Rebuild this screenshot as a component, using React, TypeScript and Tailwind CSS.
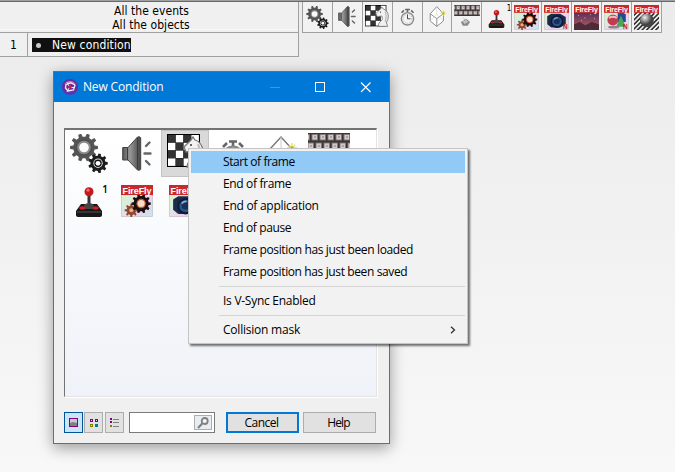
import React from "react";

type IconProps = { w: number; h: number };

function gearPath(cx: number, cy: number, outer: number, inner: number, teeth: number) {
  const pts: string[] = [];
  const step = (Math.PI * 2) / teeth;
  for (let i = 0; i < teeth; i++) {
    const a = i * step;
    [
      [a - step * 0.3, inner],
      [a - step * 0.18, outer],
      [a + step * 0.18, outer],
      [a + step * 0.3, inner],
    ].forEach(([t, r]) => pts.push(`${(cx + Math.cos(t) * r).toFixed(2)} ${(cy + Math.sin(t) * r).toFixed(2)}`));
  }
  return `M${pts.join("L")}Z`;
}

function Gears({ w, h }: IconProps) {
  return (
    <svg width={w} height={h} viewBox="0 0 38 39">
      <path d={gearPath(14, 13.5, 14, 10.8, 10)} fill="#555" />
      <circle cx="14" cy="13.5" r="7.4" fill="#8a8a8a" stroke="#444" />
      <circle cx="14" cy="13.5" r="4.8" fill="#fafafa" />
      <path d={gearPath(28, 29.3, 9.8, 7.6, 9)} fill="#1c1c1c" />
      <circle cx="28" cy="29.3" r="4.7" fill="#ddd" />
      <circle cx="28" cy="29.3" r="3.7" fill="#111" />
      <circle cx="28" cy="29.3" r="2.4" fill="#fff" />
    </svg>
  );
}

function Speaker({ w, h }: IconProps) {
  return (
    <svg width={w} height={h} viewBox="0 0 30 35">
      <defs>
        <linearGradient id="cone" x1="0" x2="1">
          <stop offset="0" stopColor="#555" />
          <stop offset=".4" stopColor="#999" />
          <stop offset=".75" stopColor="#666" />
          <stop offset="1" stopColor="#444" />
        </linearGradient>
      </defs>
      <path d="M.7 11.5H6L15.5 1Q18 0 18.7 2V33Q18 35 15.5 34L6 24H.7Z" fill="url(#cone)" stroke="#444" />
      <path d="M5.5 12V24M15.5 2V33" stroke="#3a3a3a" fill="none" />
      <path d="M24 10l3.5-3.5M22.5 17.5H28.5M24 25l3.5 3.5" stroke="#666" strokeWidth="2.4" strokeLinecap="round" />
    </svg>
  );
}

function Chess({ w, h }: IconProps) {
  const squares = Array.from({ length: 16 }, (_, i) => [i % 4, Math.floor(i / 4)]);
  return (
    <svg width={w} height={h} viewBox="0 0 37 34">
      <rect width="33" height="33" fill="#000" />
      {squares.map(([x, y]) => (
        <rect key={`${x}-${y}`} x={1 + x * 7.8} y={1 + y * 7.8} width="7.5" height="7.5" fill={(x + y) % 2 ? "#fff" : "#333"} />
      ))}
      <path
        d="M17 13L24 6L26 3L28 6Q35 8 36 17Q36 23 33 27L35 33H20Q20 28 27 22L26 17L19 18Z"
        fill="#f2f2f2"
        stroke="#777"
        strokeWidth="1.3"
      />
      <path d="M31 10Q34 16 31 26" fill="none" stroke="#bbb" strokeWidth="2" />
      <circle cx="24" cy="11" r=".9" fill="#222" />
    </svg>
  );
}

function Stopwatch({ w, h }: IconProps) {
  return (
    <svg width={w} height={h} viewBox="0 0 24 30">
      <path d="M8 2.5h8M12 3v5M2 8l4-4M22 8l-4-4" stroke="#666" strokeWidth="2.6" />
      <circle cx="12" cy="18" r="10.3" fill="#f4f4f4" stroke="#888" strokeWidth="2.2" />
      <circle cx="12" cy="18" r="7.4" fill="none" stroke="#888" strokeWidth="1.6" strokeDasharray="1 2.4" />
      <path d="M12 11v7h5" fill="none" stroke="#444" strokeWidth="1.6" />
    </svg>
  );
}

function Cube({ w, h }: IconProps) {
  return (
    <svg width={w} height={h} viewBox="0 0 28 35">
      <path d="M12 1L23 13V25L12 34L1 25V13Z" fill="#fff" stroke="#777" strokeWidth="1.4" />
      <path d="M1 13L12 21L23 13M12 21V34" fill="none" stroke="#777" strokeWidth="1.3" />
      <path d="M12 1V14L1 25M12 14L23 25" fill="none" stroke="#ccc" />
      <path d="M23 7v10M18 12h10M20 9l6 6M26 9l-6 6" stroke="#e6e23c" strokeWidth="1.3" />
      <circle cx="23" cy="12" r="1.5" fill="#999" />
    </svg>
  );
}

function Keyboard({ w, h }: IconProps) {
  return (
    <svg width={w} height={h} viewBox="0 0 42 36">
      <rect width="42" height="18" fill="#393535" />
      {[0, 1, 2, 3, 4, 5].map((i) => (
        <g key={i}>
          <rect x={i * 8 - 4} y="1.5" width="5.5" height="5.5" fill="#d4c9cb" stroke="#827777" />
          <rect x={i * 8} y="10" width="5.5" height="5.5" fill="#d4c9cb" stroke="#827777" />
          <path d={`M${i * 8 - 2} 4h2M${i * 8 + 2} 13h2`} stroke="#877" />
        </g>
      ))}
      <path d="M15 21l3 4" stroke="#999" />
      <path d="M11 28L20 23L26 28L22 34L14 34Z" fill="#888" />
      <path d="M14 27L20 24L23 28L17 31Z" fill="#c4c4c4" />
    </svg>
  );
}

function Joystick({ w, h }: IconProps) {
  return (
    <svg width={w} height={h} viewBox="0 0 26 30">
      <path d="M13 6V22" stroke="#333" strokeWidth="3" />
      <circle cx="13" cy="4.7" r="4.5" fill="#c8161d" />
      <circle cx="12" cy="3.2" r="1.6" fill="#f06a6a" />
      <path d="M5 17H21L26 24V28Q26 30 23 30H3Q0 30 0 28V24Z" fill="#181818" />
      <path d="M8 18Q13 14 18 18L17 22H9Z" fill="#444" />
      <ellipse cx="6.3" cy="21" rx="3" ry="1.7" fill="#d91c22" />
      <ellipse cx="19.7" cy="21" rx="3" ry="1.7" fill="#d91c22" />
      <path d="M1 25H25" stroke="#555" />
    </svg>
  );
}

type FlyKind = "gears" | "camera" | "sunset" | "shapes" | "ball";

function FireFly({ w, h, kind }: IconProps & { kind: FlyKind }) {
  return (
    <svg width={w} height={h} viewBox="0 0 31 31" preserveAspectRatio="none" className="overflow-visible">
      <defs>
        <linearGradient id="pastel" x1="0" y1="0" x2="1" y2="1">
          <stop offset="0" stopColor="#f4eaa8" />
          <stop offset=".35" stopColor="#d4f0dc" />
          <stop offset=".65" stopColor="#f8ccee" />
          <stop offset="1" stopColor="#bdeaf0" />
        </linearGradient>
        <linearGradient id="dusk" x1="0" y1="0" x2="0" y2="1">
          <stop offset="0" stopColor="#54305f" />
          <stop offset=".7" stopColor="#a0515c" />
          <stop offset="1" stopColor="#5c2f35" />
        </linearGradient>
        <radialGradient id="steel" cx=".35" cy=".3">
          <stop offset="0" stopColor="#eee" />
          <stop offset=".5" stopColor="#999" />
          <stop offset="1" stopColor="#444" />
        </radialGradient>
        <pattern id="stripes" width="4" height="4" patternUnits="userSpaceOnUse" patternTransform="rotate(45)">
          <rect width="4" height="4" fill="#eee" />
          <rect width="2" height="4" fill="#333" />
        </pattern>
      </defs>
      <rect x=".4" y=".4" width="30.2" height="30.2" fill="url(#pastel)" stroke="#bbb" strokeWidth=".6" />
      {kind === "gears" && (
        <g>
          <path d={gearPath(10, 24.5, 6.5, 4.6, 8)} fill="#8c4a30" />
          <circle cx="10" cy="24.5" r="2" fill="#f0b07a" />
          <path d={gearPath(19.5, 18, 9.4, 7.4, 10)} fill="#17100e" />
          <circle cx="19.5" cy="18" r="4.6" fill="#d1532f" />
          <circle cx="19.5" cy="18" r="3.4" fill="#f5dccb" />
        </g>
      )}
      {kind === "camera" && (
        <g>
          <path d="M4 14L9 11H20L27 15V24L20 28H9L4 24Z" fill="#1d2a48" />
          <circle cx="16" cy="20.5" r="7" fill="#2b5484" stroke="#0b1a38" strokeWidth="2" />
          <circle cx="16" cy="20" r="3.6" fill="#16305a" />
          <path d="M12.5 18Q14 15.500 17 16" stroke="#8db4d8" strokeWidth="1.6" fill="none" />
          <text x="23.500" y="30" fontFamily="Liberation Sans" fontSize="8" fontWeight="bold" fill="#c21d25">N</text>
        </g>
      )}
      {kind === "sunset" && (
        <g>
          <rect x="0" y="9" width="31" height="22" fill="url(#dusk)" />
          <path d="M0 24L7 21L14 25L22 21L31 24V31H0Z" fill="#4d2b38" />
          <path d="M5 13h1M13 16h1M20 12h1M25 17h1M9 19h1" stroke="#edc" />
        </g>
      )}
      {kind === "shapes" && (
        <g>
          <rect x="17" y="10" width="10" height="11" fill="#244992" />
          <path d="M21 13L27 27H15Z" fill="#4da657" />
          <circle cx="11" cy="18.500" r="6.8" fill="#c23c50" />
          <path d="M6 16Q11 13 16 16" stroke="#f0bcc2" strokeWidth="2.4" fill="none" />
          <ellipse cx="12" cy="27.500" rx="7" ry="1.700" fill="#888" />
          <text x="23.500" y="30" fontFamily="Liberation Sans" fontSize="8" fontWeight="bold" fill="#c21d25">N</text>
        </g>
      )}
      {kind === "ball" && (
        <g>
          <rect y="9" width="31" height="22" fill="url(#stripes)" />
          <circle cx="16" cy="19" r="8.5" fill="url(#steel)" />
        </g>
      )}
      <rect width="31" height="9.7" fill="#c9292d" />
      <text x="1.5" y="8.3" textLength="28" lengthAdjust="spacing" fontFamily="Liberation Sans" fontWeight="bold" fontSize="8.7" fill="#fff">FireFly</text>
    </svg>
  );
}

function OneBadge({ children, className }: { children: React.ReactNode; className: string }) {
  return (
    <div className="relative flex">
      {children}
      <span className={`absolute text-black ${className}`}>1</span>
    </div>
  );
}

const toolbar = [
  <Gears w={23} h={23} />,
  <div className="pb-[2px]"><Speaker w={18} h={21} /></div>,
  <div className="pb-[3px]"><Chess w={24} h={22} /></div>,
  <Stopwatch w={15} h={18} />,
  <div className="pb-[2px] pl-[2px]"><Cube w={18} h={21} /></div>,
  <div className="pb-[3px]"><Keyboard w={26} h={22} /></div>,
  <OneBadge className="-top-[2px] -right-[6px] text-[8px] leading-[10px]">
    <div className="pt-[4px]"><Joystick w={17} h={18} /></div>
  </OneBadge>,
  <FireFly w={25} h={25} kind="gears" />,
  <FireFly w={25} h={25} kind="camera" />,
  <FireFly w={25} h={25} kind="sunset" />,
  <FireFly w={25} h={25} kind="shapes" />,
  <FireFly w={25} h={25} kind="ball" />,
];

const objects = [
  <Gears w={38} h={39} />,
  <Speaker w={30} h={35} />,
  <div className="pb-[5px] pl-[1px]"><Chess w={37} h={34} /></div>,
  <Stopwatch w={24} h={30} />,
  <div className="pl-[4px]"><Cube w={28} h={35} /></div>,
  <div className="pb-[6px]"><Keyboard w={42} h={36} /></div>,
  <OneBadge className="-top-[1px] -right-[5px] text-[10px] leading-[10px] font-semibold">
    <div className="px-px pt-[2px]"><Joystick w={26} h={30} /></div>
  </OneBadge>,
  <FireFly w={32} h={32} kind="gears" />,
  <FireFly w={32} h={32} kind="camera" />,
];

function MenuItem({ label, active, arrow, tracking }: { label: string; active?: boolean; arrow?: boolean; tracking: string }) {
  return (
    <div className={`flex h-[22px] items-center justify-between pr-[9px] pl-8 ${active ? "bg-[#91c9f7]" : ""}`}>
      <span className={`whitespace-nowrap ${tracking}`}>{label}</span>
      {arrow && (
        <svg width="6" height="8" viewBox="0 0 6 8">
          <path d="M1 .7L4.500 4L1 7.3" fill="none" stroke="#333" strokeWidth="1.3" />
        </svg>
      )}
    </div>
  );
}

function Separator() {
  return <div className="mt-[3px] mb-[3px] ml-[28px] h-px bg-[#d5d5d5]" />;
}

export default function App() {
  return (
    <div className="relative h-[472px] w-[675px] overflow-hidden bg-linear-to-b from-[#ebebeb] to-[#f8f8f8] text-black">
      <div className="h-px bg-[#a0a0a0]" />
      <div className="h-px bg-[#696969]" />
      <div className="flex items-start font-['DejaVu_Sans_Condensed','DejaVu_Sans',sans-serif] text-[12px]">
        <div className="w-[299px] border-r border-[#a0a0a0] bg-[#f0f0f0]">
          <div className="flex h-[31px] flex-col items-center border-b border-[#a0a0a0] bg-linear-to-b from-transparent from-[27px] via-white via-[27px] to-transparent to-[28px] pt-[2px] leading-[14px]">
            <span className="pl-[5px] tracking-[0.05px]">All the events</span>
            <span className="pl-[4px] tracking-[0.05px]">All the objects</span>
          </div>
          <div className="flex h-6 border-b border-[#a0a0a0]">
            <div className="flex w-7 items-center justify-center border-r border-[#a0a0a0]">1</div>
            <div className="flex items-center pl-1">
              <div className="flex h-[14px] w-[99px] items-center bg-[#101010] pl-1 leading-[14px] text-white">
                <span className="mt-[2px] mr-[11px] h-[5px] w-[5px] shrink-0 rounded-full bg-[#c8c8c8]" />
                <span className="whitespace-nowrap tracking-[0.15px]">New condition</span>
              </div>
            </div>
          </div>
        </div>
        <div className="ml-[3px] flex h-[31px] border-b border-l border-[#a0a0a0] bg-[#f2f2f2]">
          {toolbar.map((icon, i) => (
            <div key={i} className="flex w-[29.9px] items-center justify-center border-r border-[#a0a0a0]">{icon}</div>
          ))}
        </div>
      </div>

      <div className="absolute top-[71px] left-[53px] flex h-[373px] w-[337px] flex-col border border-[#1883d7] bg-[#f0f0f0] font-['Open_Sans','Noto_Sans',sans-serif] text-[12px] shadow-[0_4px_14px_rgba(0,0,0,0.38)]">
        <div className="flex h-[30px] shrink-0 items-center bg-[#0078d7] pl-2 text-white">
          <svg width="16" height="16" viewBox="0 0 16 16">
            <defs>
              <radialGradient id="orb" cx=".5" cy=".9">
                <stop offset="0" stopColor="#4a3cc8" />
                <stop offset="1" stopColor="#6c2a9c" />
              </radialGradient>
            </defs>
            <circle cx="8" cy="8" r="8" fill="url(#orb)" />
            <path d="M2 5Q8 -1 14 5Q8 3 2 5Z" fill="#d5bce4" opacity=".7" />
            <path d="M4 5.5L9 4L13 6L11.500 11L6 12L3.500 9Z" fill="none" stroke="#eee" strokeWidth="1.3" />
            <path d="M5 3.500L7 7M13 8.500L9 8.500M5 13L7 9" stroke="#eee" />
            <circle cx="8" cy="8" r="1.7" fill="#d51e3f" />
          </svg>
          <span className="ml-[5px] grow tracking-[-0.17px]">New Condition</span>
          <svg className="mr-[17px]" width="102" height="12" viewBox="0 0 102 12">
            <path d="M0 6.500H10" stroke="#3f97df" />
            <rect x="45.500" y="1.500" width="9" height="9" fill="none" stroke="#fff" />
            <path d="M91 1.500L100.500 11M100.500 1.500L91 11" stroke="#fff" strokeWidth="1.1" />
          </svg>
        </div>

        <div className="mt-[26px] ml-[10px] grid h-[269px] w-[313px] shrink-0 grid-cols-[repeat(6,48px)] grid-rows-[47px_48px] content-start border border-t-2 border-[#e3e3e3] border-t-[#737373] border-l-[#737373] bg-linear-to-b from-white to-[#eff2f8] shadow-[1px_1px_0_#fff]">
          {objects.map((icon, i) => (
            <div key={i} className={`flex items-center justify-center ${i === 2 ? "border border-[#c3c3c3] bg-[#d9d9d9]" : ""}`}>{icon}</div>
          ))}
        </div>

        <div className="mt-[15px] flex h-[21px] items-stretch pl-[10px]">
          <div className="flex w-[19px] items-center justify-center border border-[#005499] bg-[#cce4f7]">
            <svg width="9" height="9" viewBox="0 0 9 9">
              <rect x=".5" y=".5" width="8" height="8" fill="#c8c8c8" stroke="#800080" />
              <path d="M1 5L4 4L8 5V8H1Z" fill="#808080" />
            </svg>
          </div>
          <div className="ml-px flex w-[19px] items-center justify-center border border-[#adadad] bg-[#e1e1e1]">
            <svg width="9" height="9" viewBox="0 0 9 9" fill="#ddd" shapeRendering="crispEdges">
              <rect x="1.500" y="1.500" width="2" height="2" stroke="#800080" />
              <rect x="6.500" y="1.500" width="2" height="2" stroke="#800080" />
              <rect x="1.500" y="6.500" width="2" height="2" stroke="#808000" />
              <rect x="6.500" y="6.500" width="2" height="2" fill="#008080" stroke="#008080" />
            </svg>
          </div>
          <div className="ml-[2px] flex w-[19px] items-center justify-center border border-[#adadad] bg-[#e1e1e1]">
            <svg width="9" height="9" viewBox="0 0 9 9" shapeRendering="crispEdges">
              <path d="M0 1H2M0 4H2" stroke="#800080" strokeWidth="2" />
              <path d="M0 8H2" stroke="#808000" strokeWidth="2" />
              <path d="M3 1.500H9M3 4.500H9M3 8.500H9" stroke="#808080" />
            </svg>
          </div>
          <div className="ml-[5px] flex w-[86px] items-center justify-end border border-[#7a7a7a] bg-white pr-[2px]">
            <div className="flex h-[15px] w-[18px] items-center justify-center border border-[#adadad] bg-[#e8edf2]">
              <svg width="12" height="12" viewBox="0 0 12 12">
                <circle cx="7.7" cy="4" r="3" fill="#f4f4f4" stroke="#808080" strokeWidth="1.8" />
                <path d="M5.200 6.500L1 11" stroke="#808080" strokeWidth="2.2" />
              </svg>
            </div>
          </div>
          <div className="ml-[11px] flex w-[73px] items-center justify-center border-2 border-[#0078d7] bg-[#e1e1e1] pr-[2px] tracking-[-0.5px]">Cancel</div>
          <div className="ml-1 flex w-[73px] items-center justify-center border border-[#adadad] bg-[#e1e1e1] pr-[2px] tracking-[-0.9px]">Help</div>
        </div>
      </div>

      <div className="absolute top-[148px] left-[188px] h-[196px] w-[280px] border border-[#c5c5c5] bg-[#f2f2f2] p-[2px] font-['Open_Sans','Noto_Sans',sans-serif] text-[12px] shadow-[2px_2px_2px_rgba(0,0,0,0.55)]">
        <MenuItem label="Start of frame" tracking="tracking-[-0.42px]" active />
        <MenuItem label="End of frame" tracking="tracking-[-0.35px]" />
        <MenuItem label="End of application" tracking="tracking-[-0.27px]" />
        <MenuItem label="End of pause" tracking="tracking-[-0.38px]" />
        <MenuItem label="Frame position has just been loaded" tracking="tracking-[-0.37px]" />
        <MenuItem label="Frame position has just been saved" tracking="tracking-[-0.38px]" />
        <Separator />
        <MenuItem label="Is V-Sync Enabled" tracking="tracking-[-0.27px]" />
        <Separator />
        <MenuItem label="Collision mask" tracking="tracking-[-0.22px]" arrow />
      </div>
    </div>
  );
}
